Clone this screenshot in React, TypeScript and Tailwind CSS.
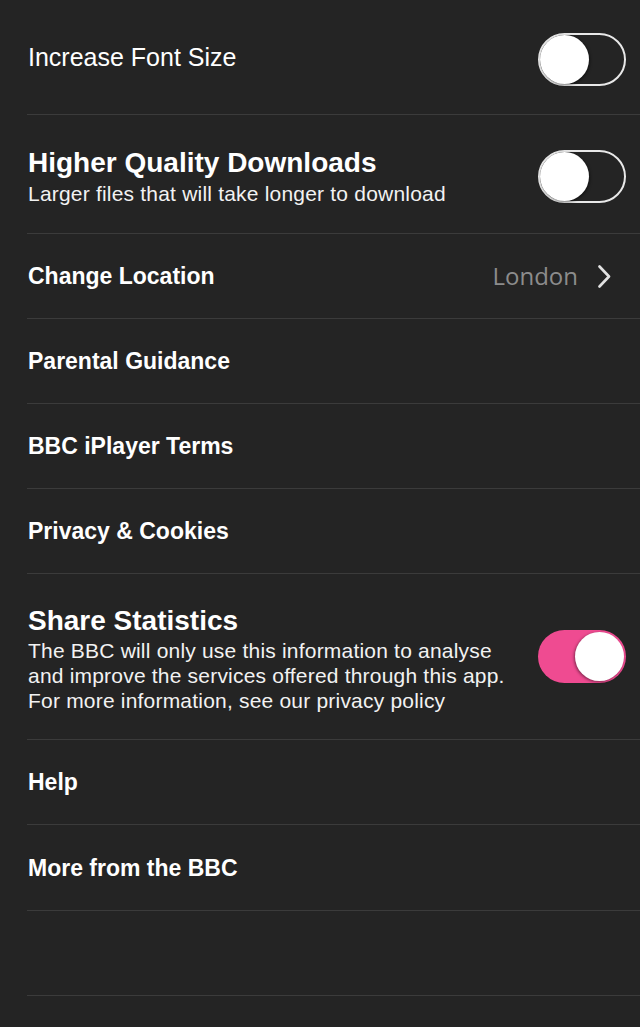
import React from 'react';

type Row = {
    title: string;
    sub?: string[];
    bold?: boolean;
    big?: boolean;
    toggle?: 'on' | 'off';
    value?: string;
    h: string;
};

const ROWS: Row[] = [
    { title: 'Increase Font Size', toggle: 'off', h: 'h-[115px]' },
    { title: 'Higher Quality Downloads', sub: ['Larger files that will take longer to download'], bold: true, big: true, toggle: 'off', h: 'h-[119px]' },
    { title: 'Change Location', bold: true, value: 'London', h: 'h-[85px]' },
    { title: 'Parental Guidance', bold: true, h: 'h-[85px]' },
    { title: 'BBC iPlayer Terms', bold: true, h: 'h-[85px]' },
    { title: 'Privacy & Cookies', bold: true, h: 'h-[85px]' },
    {
        title: 'Share Statistics',
        sub: [
            'The BBC will only use this information to analyse',
            'and improve the services offered through this app.',
            'For more information, see our privacy policy',
        ],
        bold: true,
        big: true,
        toggle: 'on',
        h: 'h-[166px]',
    },
    { title: 'Help', bold: true, h: 'h-[85px]' },
    { title: 'More from the BBC', bold: true, h: 'h-[86px]' },
    { title: '', h: 'h-[85px]' },
];

function Toggle({ on }: { on: boolean }) {
    if (on) {
        return (
            <div className="w-[88px] h-[53px] rounded-full bg-[#ef4b91] flex items-center justify-end pr-[2px] shrink-0">
                <div className="w-[49px] h-[49px] rounded-full bg-white shadow-[-1px_1px_3px_rgba(0,0,0,0.45)]" />
            </div>
        );
    }
    return (
        <div className="w-[88px] h-[53px] mt-[5px] rounded-full border-2 border-[#e8e8e8] flex items-center justify-start shrink-0">
            <div className="w-[49px] h-[49px] rounded-full bg-white shadow-[1px_1px_3px_rgba(0,0,0,0.5)]" />
        </div>
    );
}

export default function App() {
    return (
        <div className="w-full min-h-[1027px] bg-[#242424] text-white" style={{ fontFamily: '"Liberation Sans", Arial, sans-serif' }}>
            {ROWS.map((row, i) => (
                <div
                    key={i}
                    className={`${row.h} ml-[27px] pl-px border-b border-[#3b3b3b] flex items-center justify-between ${row.value ? 'pr-[29px]' : 'pr-[14px]'}`}
                >
                    <div className={row.sub ? 'pt-[6px]' : ''}>
                        {row.title && (
                            <p
                                className={
                                    row.big
                                        ? 'text-[28px] leading-[30px] font-bold'
                                        : row.bold
                                            ? 'text-[23px] leading-[28px] font-bold'
                                            : 'text-[25px] leading-[30px]'
                                }
                            >
                                {row.title}
                            </p>
                        )}
                        {row.sub && (
                            <div className={`text-[21px] tracking-[0.2px] text-[#f2f2f2] ${row.toggle === 'on' ? 'leading-[25px] mt-[2px]' : 'leading-[24px] mt-[4px]'}`}>
                                {row.sub.map((line) => (
                                    <p key={line}>{line}</p>
                                ))}
                            </div>
                        )}
                    </div>
                    {row.toggle && <Toggle on={row.toggle === 'on'} />}
                    {row.value && (
                        <div className="flex items-center gap-[20px]">
                            <span className="text-[24px] text-[#8c8c8c]" style={{ fontFamily: '"Open Sans", sans-serif' }}>
                                {row.value}
                            </span>
                            <svg width="13" height="23" viewBox="0 0 13 23" fill="none">
                                <polyline points="1.5,1.5 11,11.5 1.5,21.5" stroke="#e2e2e2" strokeWidth="2.6" strokeLinecap="round" strokeLinejoin="round" />
                            </svg>
                        </div>
                    )}
                </div>
            ))}
        </div>
    );
}
